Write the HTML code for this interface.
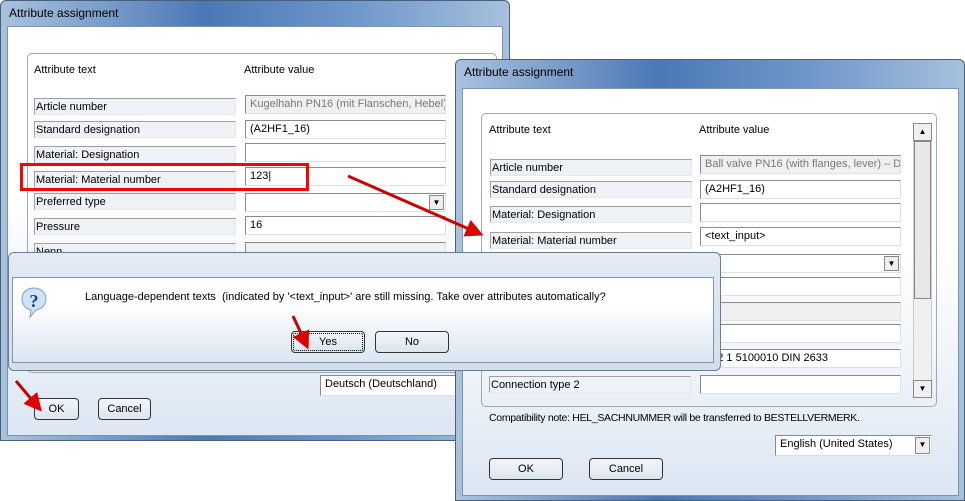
<!DOCTYPE html>
<html><head><meta charset="utf-8"><style>
*{box-sizing:border-box;margin:0;padding:0}
body{width:965px;height:501px;background:#fff;position:relative;overflow:hidden;font-family:"Liberation Sans",sans-serif;font-size:11px;color:#000}
.a{position:absolute}
.win{position:absolute;border:1px solid #4a5f7a;border-radius:6px 6px 0 0;background:linear-gradient(90deg,#a9c2de,#4b78b6 40%,#6f98cb 70%,#a7c0dd)}
.title{position:absolute;left:8px;top:5px;font-size:12px;color:#000}
.client{position:absolute;border:1px solid #7f95ad;background:linear-gradient(#fff,#fff 40%,#dce7f3)}
.grp{position:absolute;border:1px solid #a0a8b0;border-radius:5px}
.lbl{position:absolute;height:17px;border:1px solid #a0a0a0;border-right-color:#e8e8e8;border-bottom-color:#e8e8e8;background:#eef2f7;padding-left:1px;line-height:17px;white-space:nowrap;overflow:hidden}
.val{position:absolute;height:19px;border:1px solid #8a8a8a;border-right-color:#e0e0e0;border-bottom-color:#e0e0e0;background:#fff;padding-left:4px;line-height:17px;white-space:nowrap;overflow:hidden}
.dis{background:#f0f0f0;color:#777}
.dd{position:absolute;right:1px;top:1px;width:15px;height:15px;background:#eee;border:1px solid #888;font-size:8px;text-align:center;line-height:13px}
.btn{position:absolute;height:22px;border:1px solid #333;border-radius:4px;background:linear-gradient(#f3f6fa,#dbe5f0);text-align:center;line-height:20px}
</style></head><body>

<div class="win" style="left:0;top:0;width:510px;height:441px">
  <div class="title">Attribute assignment</div>
  <div class="client" style="left:6px;top:25px;width:496px;height:410px"></div>
</div>
<div class="grp" style="left:27px;top:53px;width:470px;height:320px"></div>
<div class="a" style="left:34px;top:64px">Attribute text</div>
<div class="a" style="left:244px;top:64px">Attribute value</div>
<div class="lbl" style="left:34px;top:98px;width:202px">Article number</div>
<div class="val dis" style="left:245px;top:95px;width:201px">Kugelhahn PN16 (mit Flanschen, Hebel) -</div>
<div class="lbl" style="left:34px;top:121px;width:202px">Standard designation</div>
<div class="val" style="left:245px;top:120px;width:201px">(A2HF1_16)</div>
<div class="lbl" style="left:34px;top:146px;width:202px">Material: Designation</div>
<div class="val" style="left:245px;top:143px;width:201px"></div>
<div class="lbl" style="left:34px;top:171px;width:202px">Material: Material number</div>
<div class="val" style="left:245px;top:167px;width:201px">123|</div>
<div class="lbl" style="left:34px;top:193px;width:202px">Preferred type</div>
<div class="val" style="left:245px;top:193px;width:201px"><div class="dd">▼</div></div>
<div class="lbl" style="left:34px;top:218px;width:202px">Pressure</div>
<div class="val" style="left:245px;top:216px;width:201px">16</div>
<div class="lbl" style="left:34px;top:243px;width:202px">Nenn</div>
<div class="val dis" style="left:245px;top:242px;width:201px"></div>
<div class="a" style="left:20px;top:163px;width:289px;height:28px;border:3px solid #f00"></div>
<div class="val" style="left:320px;top:375px;width:140px;height:21px">Deutsch (Deutschland)</div>
<div class="btn" style="left:34px;top:398px;width:45px">OK</div>
<div class="btn" style="left:98px;top:398px;width:53px">Cancel</div>

<div class="win" style="left:455px;top:59px;width:510px;height:442px">
  <div class="title">Attribute assignment</div>
  <div class="client" style="left:6px;top:28px;width:497px;height:408px"></div>
</div>
<div class="grp" style="left:481px;top:113px;width:456px;height:294px"></div>
<div class="a" style="left:489px;top:124px">Attribute text</div>
<div class="a" style="left:699px;top:124px">Attribute value</div>
<div class="lbl" style="left:490px;top:159px;width:202px">Article number</div>
<div class="val dis" style="left:700px;top:155px;width:201px">Ball valve PN16 (with flanges, lever) – DI</div>
<div class="lbl" style="left:490px;top:181px;width:202px">Standard designation</div>
<div class="val" style="left:700px;top:180px;width:201px">(A2HF1_16)</div>
<div class="lbl" style="left:490px;top:206px;width:202px">Material: Designation</div>
<div class="val" style="left:700px;top:203px;width:201px"></div>
<div class="lbl" style="left:490px;top:232px;width:202px">Material: Material number</div>
<div class="val" style="left:700px;top:227px;width:201px">&lt;text_input&gt;</div>
<div class="val" style="left:700px;top:254px;width:201px"><div class="dd">▼</div></div>
<div class="val" style="left:700px;top:277px;width:201px"></div>
<div class="val dis" style="left:700px;top:302px;width:201px"></div>
<div class="val" style="left:700px;top:324px;width:201px"></div>
<div class="val" style="left:700px;top:349px;width:201px">102 1 5100010 DIN 2633</div>
<div class="lbl" style="left:489px;top:376px;width:202px">Connection type 2</div>
<div class="val" style="left:700px;top:375px;width:201px"></div>
<div class="a" style="left:913px;top:123px;width:19px;height:275px;background:#f0f0f0;border:1px solid #ccc"></div>
<div class="a" style="left:913px;top:123px;width:19px;height:18px;background:#f0f0f0;border:1px solid #888;font-size:8px;text-align:center;line-height:16px">▲</div>
<div class="a" style="left:914px;top:141px;width:17px;height:158px;background:#e8e8e8;border:1px solid #888"></div>
<div class="a" style="left:913px;top:380px;width:19px;height:18px;background:#f0f0f0;border:1px solid #888;font-size:8px;text-align:center;line-height:16px">▼</div>
<div class="a" style="left:489px;top:412px;font-size:10.5px;letter-spacing:-0.3px">Compatibility note: HEL_SACHNUMMER will be transferred to BESTELLVERMERK.</div>
<div class="val" style="left:775px;top:435px;width:157px;height:21px">English (United States)<div class="dd" style="height:17px">▼</div></div>
<div class="btn" style="left:489px;top:458px;width:74px">OK</div>
<div class="btn" style="left:589px;top:458px;width:74px">Cancel</div>

<div class="a" style="left:8px;top:252px;width:713px;height:119px;border:1px solid #6b7c90;border-radius:6px;background:linear-gradient(#e3ebf4,#d2dfec)"></div>
<div class="a" style="left:12px;top:277px;width:702px;height:86px;border:1px solid #7f95ad;background:linear-gradient(#fff,#fff 30%,#dbe6f2)"></div>
<svg class="a" style="left:20px;top:286px" width="28" height="34" viewBox="0 0 28 34"><path d="M14 2C6 2 2 7 2 13c0 6 4 10 9 11l-1 7 6-7c6-1 10-5 10-11C26 7 21 2 14 2z" fill="#cfe2f6" stroke="#7fa3cc"/><text x="14" y="21" font-family="Liberation Serif" font-weight="bold" font-size="18" fill="#1a3c8c" text-anchor="middle">?</text></svg>
<div class="a" style="left:85px;top:291px">Language-dependent texts&nbsp; (indicated by '&lt;text_input&gt;' are still missing. Take over attributes automatically?</div>
<div class="btn" style="left:291px;top:331px;width:74px;outline:1px dotted #000;outline-offset:-3px">Yes</div>
<div class="btn" style="left:375px;top:331px;width:74px">No</div>

<svg class="a" style="left:0;top:0" width="965" height="501">
<defs><marker id="m" markerWidth="6" markerHeight="6" refX="4" refY="3" orient="auto"><path d="M0,0 L6,3 L0,6 z" fill="#d00"/></marker></defs>
<g stroke="#c00" stroke-width="3" marker-end="url(#m)" fill="none">
<line x1="348" y1="176" x2="478" y2="233"/>
<line x1="16" y1="381" x2="38" y2="407"/>
<line x1="293" y1="316" x2="306" y2="344"/>
</g></svg>
</body></html>
